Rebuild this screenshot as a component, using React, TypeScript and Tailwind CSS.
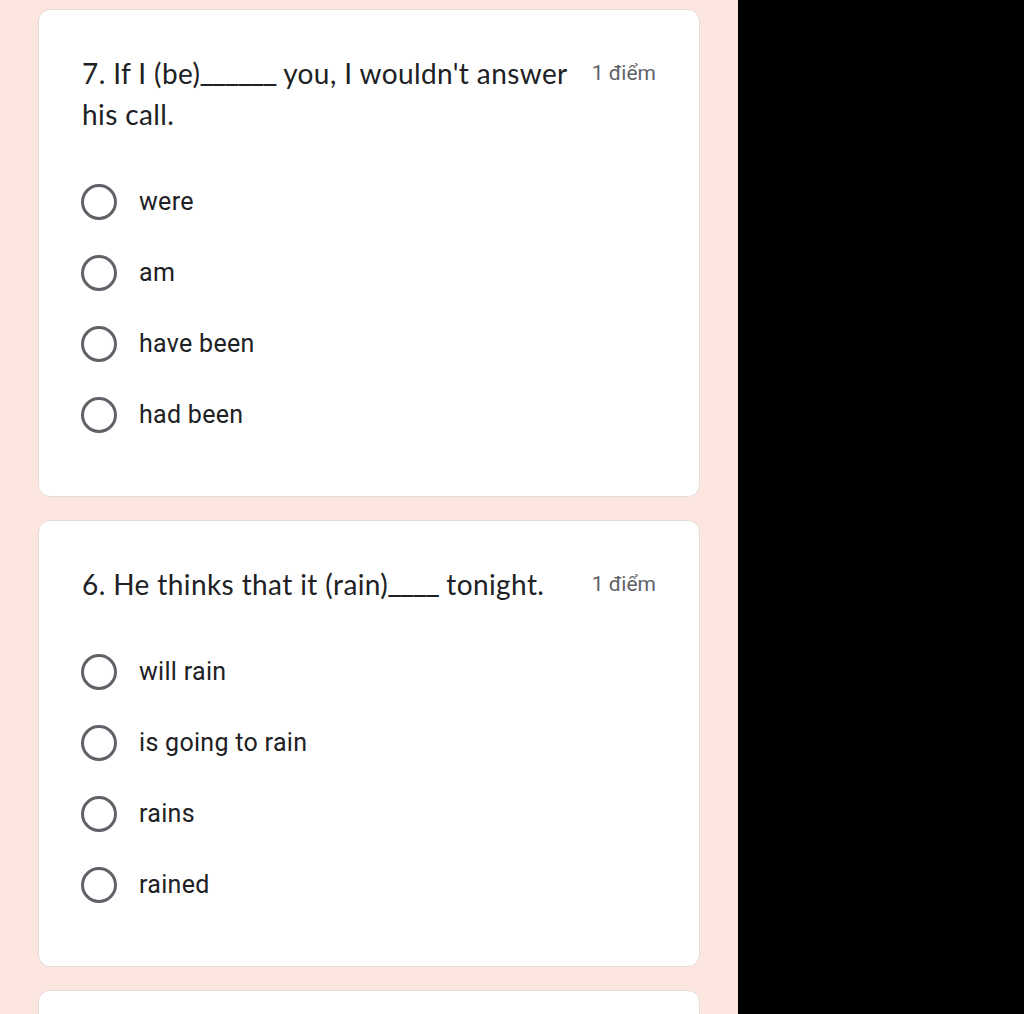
import React from "react";

type Q = { pre: string; blank: string; post: string; options: string[] };

const questions: Q[] = [
  { pre: "7. If I (be)", blank: "______", post: " you, I wouldn't answer his call.", options: ["were", "am", "have been", "had been"] },
  { pre: "6. He thinks that it (rain)", blank: "____", post: " tonight.", options: ["will rain", "is going to rain", "rains", "rained"] },
];

function Card({ q }: { q: Q }) {
  return (
    <div className="bg-white rounded-[12px] border border-[#e3dcd9] pt-[43px] pb-[46px] pl-[43px] pr-[43px]">
      <div className="flex items-start">
        <div
          className="flex-1 text-[28px] leading-[41px] text-[#202124] pr-4 tracking-[0.4px]"
          style={{ fontFamily: "Lato, Roboto, sans-serif" }}
        >
          {q.pre}
          <span className="tracking-[0px] leading-none" style={{ fontFamily: "Roboto, sans-serif" }}>
            {q.blank}
          </span>
          {q.post}
        </div>
        <div className="text-[21px] leading-[41px] text-[#5f6368] whitespace-nowrap">1 điểm</div>
      </div>
      <div className="mt-[31px]">
        {q.options.map((o) => (
          <div key={o} className="flex items-center h-[71px]">
            <div className="w-[36px] h-[36px] rounded-full border-[3px] border-[#5f6368] shrink-0 -ml-[1px]" />
            <div className="ml-[22px] text-[25px] tracking-[0.3px] text-[#202124]">{o}</div>
          </div>
        ))}
      </div>
    </div>
  );
}

export default function App() {
  return (
    <div className="flex w-[1024px] h-[1014px] overflow-hidden" style={{ fontFamily: "Roboto, 'Noto Sans', sans-serif" }}>
      <div className="w-[738px] bg-[#fde6e0] pl-[38px] pr-[38px] pt-[9px] flex flex-col gap-[23px]">
        {questions.map((q) => (
          <Card key={q.pre} q={q} />
        ))}
        <div className="bg-white rounded-[12px] border border-[#e3dcd9] h-[100px] shrink-0" />
      </div>
      <div className="flex-1 bg-black" />
    </div>
  );
}
